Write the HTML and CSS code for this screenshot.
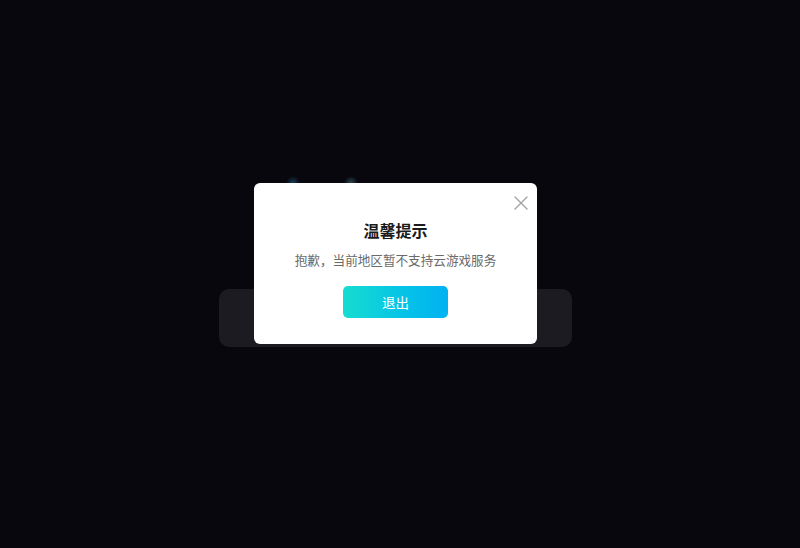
FILE: index.html
```html
<!DOCTYPE html>
<html lang="zh-CN">
<head>
<meta charset="utf-8">
<title>温馨提示</title>
<link rel="stylesheet" href="styles.css">
</head>
<body>
<div class="stage">
  <div class="bg-content">
    <div class="logo-row">
      <span class="blob"></span>
      <span class="blob blob-2"></span>
    </div>
    <div class="bg-card"></div>
  </div>
  <div class="modal">
    <button class="close" aria-label="关闭">
      <svg viewBox="0 0 14 14" width="14" height="14"><path d="M1 1 L13 13 M13 1 L1 13" stroke="#a3a3a3" stroke-width="1.4" fill="none" stroke-linecap="round"/></svg>
    </button>
    <h2 class="title">温馨提示</h2>
    <p class="msg">抱歉，当前地区暂不支持云游戏服务</p>
    <button class="exit">退出</button>
  </div>
</div>
</body>
</html>
```
FILE: styles.css
```css
html, body {
  margin: 0;
  padding: 0;
  background: #08070e;
  font-family: "Noto Sans CJK SC", "Noto Sans", sans-serif;
}
.stage {
  position: relative;
  width: 791px;
  height: 548px;
  overflow: hidden;
}
.bg-content {
  display: flex;
  flex-direction: column;
  align-items: center;
  padding-top: 176px;
}
.logo-row {
  align-self: flex-start;
  margin-left: 286px;
  display: flex;
  gap: 44px;
  height: 14px;
}
.blob {
  width: 14px;
  height: 14px;
  border-radius: 50%;
  background: radial-gradient(circle, rgba(50,130,180,0.45) 0%, rgba(30,80,120,0.2) 50%, rgba(0,0,0,0) 72%);
}
.blob-2 {
  background: radial-gradient(circle, rgba(110,170,180,0.4) 0%, rgba(60,110,120,0.18) 50%, rgba(0,0,0,0) 72%);
}
.bg-card {
  margin-top: 99px;
  width: 353px;
  height: 58px;
  border-radius: 10px;
  background: #1c1b21;
}
.modal {
  position: absolute;
  left: 254px;
  top: 183px;
  width: 283px;
  height: 161px;
  box-sizing: border-box;
  background: #ffffff;
  border-radius: 6px;
  display: flex;
  flex-direction: column;
  align-items: center;
  padding-top: 36px;
}
.close {
  position: absolute;
  left: 260px;
  top: 13px;
  width: 14px;
  height: 14px;
  padding: 0;
  border: 0;
  background: none;
  display: flex;
}
.title {
  margin: 0;
  font-size: 16px;
  line-height: 22px;
  font-weight: 700;
  color: #1b1b1b;
}
.msg {
  margin: 9px 0 0;
  font-size: 12.6px;
  line-height: 20px;
  color: #6a6a6a;
}
.exit {
  margin-top: 16px;
  width: 105px;
  height: 32px;
  border: 0;
  border-radius: 5px;
  background: linear-gradient(90deg, #17dcd0 0%, #06c4e6 55%, #00b2f2 100%);
  color: #ffffff;
  font-family: "Noto Sans CJK SC", sans-serif;
  font-size: 13.5px;
  padding: 0;
}
```
